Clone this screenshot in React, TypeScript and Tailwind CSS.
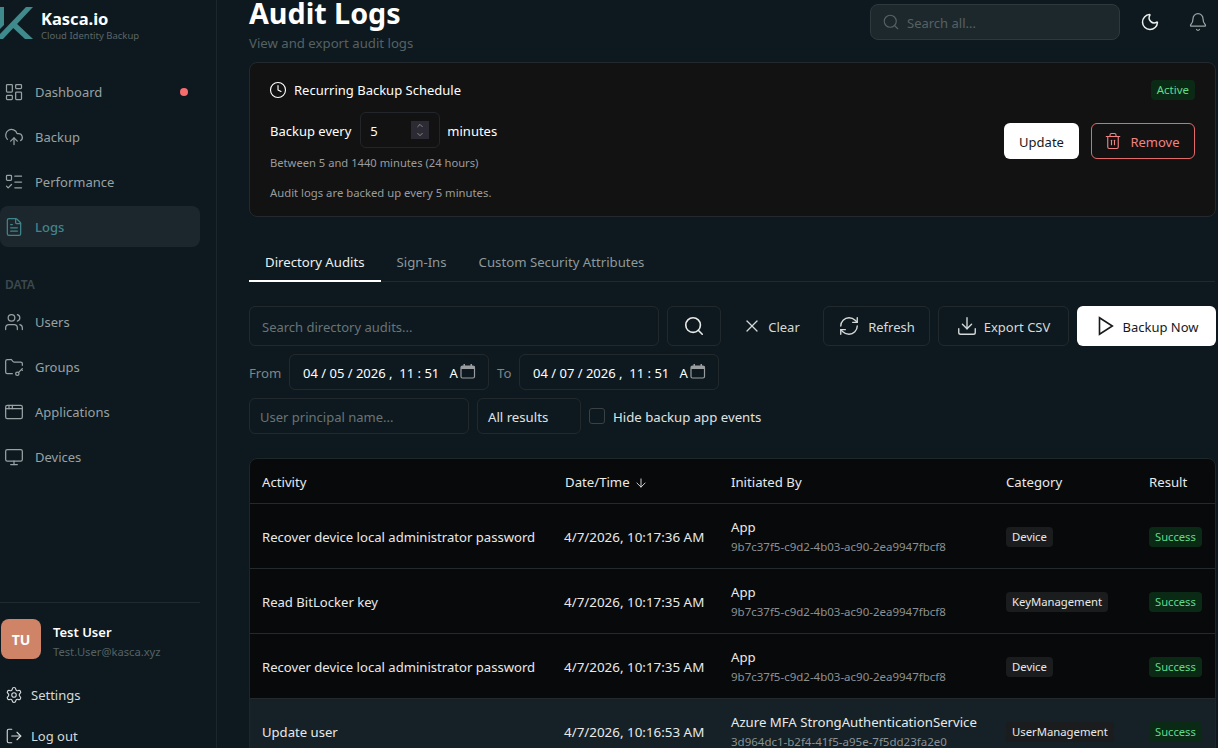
import React from "react";
import {
  LayoutDashboard, CloudUpload, ListTodo, FileText, Users, FolderKey, AppWindow, Monitor,
  Settings, LogOut, Search, Moon, Bell, Clock, Trash2, X, RefreshCw, Download, ArrowDown,
  ChevronUp, ChevronDown,
} from "lucide-react";

const font = "font-['Noto_Sans',sans-serif]";

function NavItem({ icon: Icon, label, active, dot }: { icon: any; label: string; active?: boolean; dot?: boolean }) {
  return (
    <div className={`flex h-[41px] w-[200px] items-center gap-[11px] rounded-lg pl-[4px] text-[13px] ${active ? "bg-[#1c272d] font-medium text-[#41858c]" : "text-[#98a1a4]"}`}>
      <Icon size={20} strokeWidth={1.5} />
      <span className="flex-1 pt-[2px]">{label}</span>
      {dot && <span className="mr-[12px] h-2 w-2 rounded-full bg-[#f76d6d]" />}
    </div>
  );
}

function Sidebar() {
  return (
    <aside className="flex h-[748px] w-[217px] shrink-0 flex-col border-r border-[#1b272c] bg-[#0d191e]">
      <div className="flex h-[46px] items-start">
        <svg width="34" height="34" viewBox="0 0 34 34" className="mt-[6px] shrink-0">
          <polygon points="0,1 4,1 4,19 0,23" fill="#3f8a8c" />
          <polygon points="26,1 33,1 3,33 0,33 0,28" fill="#3f8a8c" />
          <polygon points="15,16 33,33 25,33 11,20" fill="#3f8a8c" />
        </svg>
        <div className="ml-[7px] mt-[9px]">
          <div className="text-[16.5px] font-bold leading-[20px] text-white">Kasca.io</div>
          <div className="text-[9.5px] leading-[14px] text-[#5b6669]">Cloud Identity Backup</div>
        </div>
      </div>
      <nav className="mt-[25px] flex flex-col gap-1">
        <NavItem icon={LayoutDashboard} label="Dashboard" dot />
        <NavItem icon={CloudUpload} label="Backup" />
        <NavItem icon={ListTodo} label="Performance" />
        <NavItem icon={FileText} label="Logs" active />
      </nav>
      <div className="mb-[8px] ml-[5px] mt-[30px] text-xs font-semibold leading-4 text-[#3d494d]">DATA</div>
      <nav className="flex flex-col gap-1">
        <NavItem icon={Users} label="Users" />
        <NavItem icon={FolderKey} label="Groups" />
        <NavItem icon={AppWindow} label="Applications" />
        <NavItem icon={Monitor} label="Devices" />
      </nav>
      <div className="mt-auto w-[200px] border-t border-[#1e2a2f]">
        <div className="mt-4 flex h-10 items-center gap-3 pl-px">
          <div className="flex h-10 w-10 items-center justify-center rounded-lg bg-[#cf8468] pt-[2px] text-sm font-bold text-white">TU</div>
          <div className="pt-[6px]">
            <div className="text-[13px] font-semibold leading-5 text-white">Test User</div>
            <div className="text-[11.2px] leading-5 text-[#566164]">Test.User@kasca.xyz</div>
          </div>
        </div>
        <div className="mt-[26px] flex h-5 items-center gap-[8px] pl-[5px] text-[13px] text-[#d5d9da]">
          <Settings size={18} strokeWidth={1.5} />
          <span className="pt-[2px]">Settings</span>
        </div>
        <div className="mb-[2px] mt-[21px] flex h-5 items-center gap-[8px] pl-[5px] text-[13px] text-[#d5d9da]">
          <LogOut size={18} strokeWidth={1.5} />
          <span className="pt-[2px]">Log out</span>
        </div>
      </div>
    </aside>
  );
}

function PlayIcon() {
  return (
    <svg width="22" height="22" viewBox="0 0 24 24" fill="none" stroke="currentColor" strokeWidth="1.75" strokeLinejoin="miter">
      <polygon points="6 3 20 12 6 21" />
    </svg>
  );
}

function Button({ icon, label, cls }: { icon: React.ReactNode; label: string; cls: string }) {
  return (
    <div className={`flex h-10 items-center justify-center rounded-md text-[13px] ${cls}`}>
      {icon}
      <span className="pt-[4px]">{label}</span>
    </div>
  );
}

const rows = [
  ["Recover device local administrator password", "4/7/2026, 10:17:36 AM", "App", "9b7c37f5-c9d2-4b03-ac90-2ea9947fbcf8", "Device"],
  ["Read BitLocker key", "4/7/2026, 10:17:35 AM", "App", "9b7c37f5-c9d2-4b03-ac90-2ea9947fbcf8", "KeyManagement"],
  ["Recover device local administrator password", "4/7/2026, 10:17:35 AM", "App", "9b7c37f5-c9d2-4b03-ac90-2ea9947fbcf8", "Device"],
  ["Update user", "4/7/2026, 10:16:53 AM", "Azure MFA StrongAuthenticationService", "3d964dc1-b2f4-41f5-a95e-7f5dd23fa2e0", "UserManagement"],
];

function Table() {
  return (
    <div className="mt-[24px] w-[967px] rounded-t-lg border border-[#1d2629] bg-[#08090b]">
      <table className="w-full table-fixed border-collapse text-left text-[13.2px] text-[#e8eaea]">
        <colgroup>
          <col className="w-[302px]" />
          <col className="w-[166px]" />
          <col className="w-[275px]" />
          <col className="w-[143px]" />
          <col />
        </colgroup>
        <thead>
          <tr className="h-[44px] border-b border-[#24292c]">
            <th className="pl-3 pt-[4px] font-normal">Activity</th>
            <th className="pl-[13px] pt-[4px] font-normal">
              <span className="inline-flex items-center gap-1">Date/Time <ArrowDown size={14} strokeWidth={1.5} /></span>
            </th>
            <th className="pl-[13px] pt-[4px] font-normal">Initiated By</th>
            <th className="pl-[13px] pt-[4px] font-normal">Category</th>
            <th className="pl-[13px] pt-[4px] font-normal">Result</th>
          </tr>
        </thead>
        <tbody>
          {rows.map((r, i) => (
            <tr key={i} className={`h-[65px] border-b border-[#24292c] ${i === 3 ? "bg-[#152126]" : ""}`}>
              <td className="pl-3 pt-[4px] text-[13.1px]">{r[0]}</td>
              <td className="whitespace-nowrap pl-3 pt-[4px] text-[13.4px]">{r[1]}</td>
              <td className="pl-[13px] pt-px">
                <div className="whitespace-nowrap leading-5">{r[2]}</div>
                <div className="whitespace-nowrap text-[11.5px] leading-[19px] text-[#8b9194]">{r[3]}</div>
              </td>
              <td className="pl-[13px] pt-[2px]">
                <span className="inline-flex h-5 items-center rounded bg-[#1a1c1e] px-[6px] pt-[1px] text-[11.3px]">{r[4]}</span>
              </td>
              <td className="pl-[13px] pt-[2px]">
                <span className="inline-flex h-5 items-center rounded bg-[#0b2a16] px-[6px] pt-[1px] text-[11.2px] text-[#62d98b]">Success</span>
              </td>
            </tr>
          ))}
        </tbody>
      </table>
    </div>
  );
}

function DateField({ text }: { text: string }) {
  return (
    <div className="flex h-9 w-[200px] items-center rounded-md border border-[#22292c] pl-[13px] text-[13px] text-white">
      <span className="w-[156px] shrink-0 whitespace-pre pt-[4px]">{text}</span>
      <svg width="16" height="16" viewBox="0 0 16 16" className="mb-[2px] ml-[1px] text-[#9a9d9f]" fill="none">
        <rect x="1" y="3" width="13.5" height="12" rx="1.5" stroke="currentColor" strokeWidth="1.2" />
        <rect x="1" y="3" width="13.5" height="3" fill="currentColor" />
        <rect x="3.5" y="1" width="1.5" height="3" fill="currentColor" />
        <rect x="10.5" y="1" width="1.5" height="3" fill="currentColor" />
      </svg>
    </div>
  );
}

function Main() {
  return (
    <main className="min-w-0 flex-1 pl-[32px]">
      <header className="flex h-[62px] items-start">
        <div className="flex-1">
          <h1 className="-mt-[7px] text-[28.7px] font-bold leading-[40px] text-white">Audit Logs</h1>
          <p className="text-[13.2px] leading-5 text-[#566164]">View and export audit logs</p>
        </div>
        <div className="mt-1 flex h-[36px] w-[250px] items-center gap-[7px] rounded-lg border border-[#2d393d] bg-[#1d282d] pl-[11px] text-[13px] text-[#566164]">
          <Search size={18} strokeWidth={1.5} />
          <span className="pt-[3px]">Search all...</span>
        </div>
        <Moon size={20} strokeWidth={1.75} className="ml-[20px] mt-[12px] text-[#eef0f0]" />
        <Bell size={20} strokeWidth={1.5} className="ml-[28px] mr-[10px] mt-[12px] text-[#9aa3a6]" />
      </header>

      <section className="flex h-[155px] w-[967px] justify-between rounded-lg border border-[#23292c] bg-[#121212] px-5 pt-[17px]">
        <div className="text-white">
          <div className="-ml-px flex h-5 items-center gap-[7px] text-[13px]">
            <Clock size={18} strokeWidth={1.5} />
            <span className="pt-[2px]">Recurring Backup Schedule</span>
          </div>
          <div className="mt-[12px] flex items-center text-[13px]">
            <span className="mr-[9px] pt-[3px]">Backup every</span>
            <div className="mr-[7px] flex h-9 w-20 items-center justify-between rounded-md border border-[#22262a] pl-[9px] pr-[10px]">
              <span className="pt-[3px]">5</span>
              <div className="flex h-[18px] w-[18px] flex-col items-center justify-center bg-[#2c2a33] text-[#a9a9b0]">
                <ChevronUp size={10} strokeWidth={2} />
                <ChevronDown size={10} strokeWidth={2} />
              </div>
            </div>
            <span className="pt-[3px]">minutes</span>
          </div>
          <p className="mt-[5px] text-[11.2px] leading-5 text-[#9a9c9e]">Between 5 and 1440 minutes (24 hours)</p>
          <p className="mt-[10px] text-[11.3px] leading-5 text-[#9a9c9e]">Audit logs are backed up every 5 minutes.</p>
        </div>
        <div className="flex flex-col items-end">
          <span className="flex h-5 items-center rounded bg-[#0b2a16] px-[6px] text-[11.5px] text-[#62d98b]">Active</span>
          <div className="mt-[23px] flex gap-3">
            <div className="flex h-9 w-[75px] items-center justify-center rounded-md bg-white pt-[4px] text-[13px] text-[#17191a]">Update</div>
            <div className="flex h-9 w-[104px] items-center justify-center gap-[8px] rounded-md border border-[#e46a6a] pr-[2px] text-[13px] text-[#f08383]">
              <Trash2 size={18} strokeWidth={1.5} />
              <span className="pt-[4px]">Remove</span>
            </div>
          </div>
        </div>
      </section>

      <div className="mt-[28px] flex h-[37px] w-[966px] border-b border-[#1f2a2e] text-[13.2px] text-[#8f989b]">
        <div className="flex h-[37px] items-center border-b-2 border-white px-4 text-[#eef0f0]">Directory Audits</div>
        <div className="flex items-center px-[16px]">Sign-Ins</div>
        <div className="flex items-center pl-[16px]">Custom Security Attributes</div>
      </div>

      <div className="mt-[24px] flex gap-2">
        <div className="flex h-10 w-[410px] items-center rounded-md border border-[#22292c] pl-3 pt-[4px] text-[13px] text-[#6a7376]">Search directory audits...</div>
        <div className="flex h-10 w-[54px] items-center justify-center rounded-md border border-[#22292c] text-[#e8eaea]">
          <Search size={22} strokeWidth={1.75} />
        </div>
        <Button icon={<X size={20} strokeWidth={1.5} className="mr-[6px]" />} label="Clear" cls="w-[86px] pr-[2px] text-[#d5d9da]" />
        <Button icon={<RefreshCw size={22} strokeWidth={1.5} className="mr-[8px]" />} label="Refresh" cls="w-[107px] border border-[#22292c] text-[#d5d9da]" />
        <Button icon={<Download size={22} strokeWidth={1.5} className="mr-[6px]" />} label="Export CSV" cls="w-[131px] border border-[#22292c] pr-[1px] text-[#d5d9da]" />
        <Button icon={<span className="mr-[6px]"><PlayIcon /></span>} label="Backup Now" cls="w-[139px] bg-white text-[#17191a]" />
      </div>

      <div className="mt-2 flex items-center gap-2 text-[13.2px] text-[#7d8689]">
        <span className="w-[32px] pt-[4px]">From</span>
        <DateField text={"04 / 05 / 2026 ,  11 : 51   A"} />
        <span className="w-[14px] pt-[4px]">To</span>
        <DateField text={"04 / 07 / 2026 ,  11 : 51   A"} />
      </div>

      <div className="mt-2 flex items-center gap-2 text-[13.2px]">
        <div className="flex h-9 w-[220px] items-center rounded-md border border-[#22292c] pl-[10px] pt-[4px] text-[13px] text-[#6a7376]">User principal name...</div>
        <div className="flex h-9 w-[104px] items-center rounded-md border border-[#22292c] pl-[10px] pt-[4px] text-[#e0e3e4]">All results</div>
        <div className="h-4 w-4 rounded-[3px] border border-[#3a4145]" />
        <span className="pt-[4px] text-[#e0e3e4]">Hide backup app events</span>
      </div>

      <Table />
    </main>
  );
}

export default function App() {
  return (
    <div className={`flex h-[748px] w-[1218px] overflow-hidden bg-[#0d191e] ${font}`}>
      <Sidebar />
      <Main />
    </div>
  );
}
